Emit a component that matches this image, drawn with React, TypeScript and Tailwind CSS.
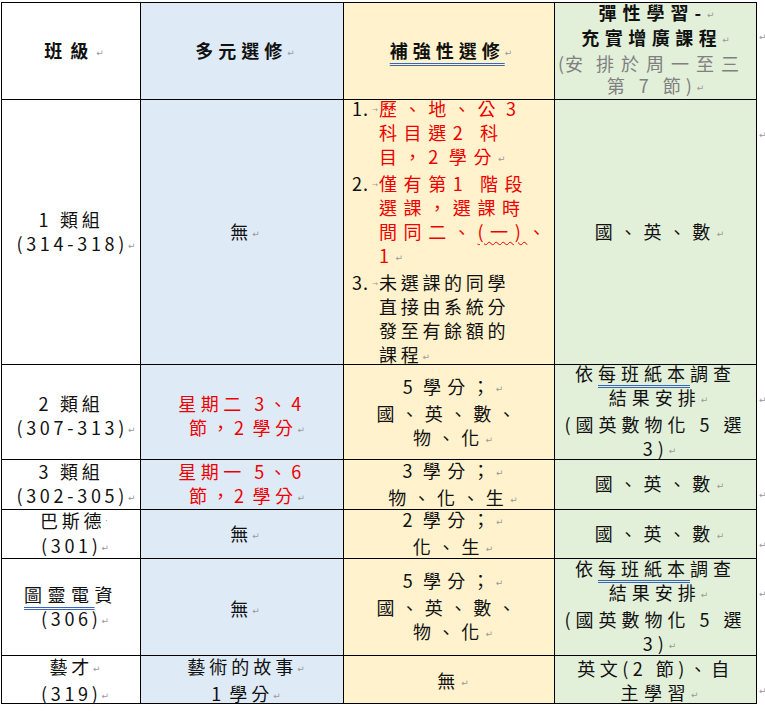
import React from "react";

const P = () => (
  <span className="font-['DejaVu_Sans',sans-serif] text-[9px] font-normal text-[#9a9a9a] tracking-normal align-[2px] no-underline">↵</span>
);

const Dot = () => (
  <span className="font-['DejaVu_Sans',sans-serif] text-[9px] font-normal text-[#9a9a9a] tracking-normal align-[4px]">·</span>
);

const Sp = () => <span className="tracking-[0px]"> </span>;

const Tab = () => (
  <span className="font-['DejaVu_Sans',sans-serif] text-[7px] text-[#9a9a9a] tracking-normal align-[4px] ml-[3px]">→</span>
);

const Item = ({ n, children }: { n: string; children: React.ReactNode }) => (
  <div className="flex">
    <div className="w-[27px] shrink-0 whitespace-nowrap tracking-[1px]">
      {n}
      <Tab />
    </div>
    <div className="whitespace-nowrap">{children}</div>
  </div>
);

const EndMark = () => (
  <div className="pt-[24px] pl-[2px] leading-[12px]">
    <span className="font-['DejaVu_Sans',sans-serif] text-[9px] text-[#9a9a9a]">↵</span>
  </div>
);

export default function App() {
  return (
    <div className="w-[765px] h-[711px] bg-white text-[#111] font-['Noto_Sans_CJK_TC','Noto_Sans_CJK_JP',sans-serif] text-[18px] leading-[24px]">
      <div className="pt-[2px] pl-px">
        <div className="grid grid-cols-[140px_203px_211px_202px_16px] grid-rows-[98px_265px_95px_50px_49px_97px_48px] whitespace-nowrap">
          {/* Header row */}
          <div className="flex flex-col justify-center items-center text-center border-l border-t border-r border-b border-black bg-white font-bold tracking-[8px] pl-[6px]">
            <div>班級<P /></div>
          </div>
          <div className="flex flex-col justify-center items-center text-center border-t border-r border-b border-black bg-[#deeaf6] font-bold tracking-[5px] pl-[6px]">
            <div>多元選修<P /></div>
          </div>
          <div className="flex flex-col justify-center items-center text-center border-t border-r border-b border-black bg-[#fff2cc] font-bold tracking-[5px] pl-[4px]">
            <div>
              <span className="underline decoration-double decoration-[#3a66b8] underline-offset-[5px] decoration-1">補強性選修</span>
              <P />
            </div>
          </div>
          <div className="flex flex-col justify-center items-center text-center border-t border-r border-b border-black bg-[#e2efd9] tracking-[5px] leading-[22.5px] pb-[2px]">
            <div className="font-bold pl-[2px] tracking-[6px]">彈性學習-<P /></div>
            <div className="font-bold tracking-[5.5px]">充實增廣課程<P /></div>
            <div className="self-stretch text-left pl-[3px] text-[#808080] tracking-[7px]">
              <span className="tracking-[1px]">(</span>
              <span className="mr-[6px]">安</span>排於周一至三
            </div>
            <div className="text-[#808080] tracking-[5px]">第 7 節)<P /></div>
          </div>
          <EndMark />

          {/* Row 1 */}
          <div className="flex flex-col justify-center items-center text-center border-l border-r border-b border-black bg-white tracking-[3.7px]">
            <div>1 類組</div>
            <div className="pl-[10px]">(314-318)<P /></div>
          </div>
          <div className="flex flex-col justify-center items-center text-center border-r border-b border-black bg-[#deeaf6] tracking-[4px]">
            <div className="pl-[6px]">無<P /></div>
          </div>
          <div className="flex flex-col justify-center items-start border-r border-b border-black bg-[#fff2cc] pl-[8px]">
            <Item n="1.">
              <div className="text-[#ee0000] tracking-[6.6px]">
                <div>歷、地、公<Sp />3</div>
                <div>科目選2 科</div>
                <div>目，2<Sp />學分<P /></div>
              </div>
            </Item>
            <Item n="2.">
              <div className="text-[#ee0000] tracking-[6.6px]">
                <div>僅有第1 階段</div>
                <div>選課，選課時</div>
                <div>
                  間同二、
                  <span className="underline decoration-wavy decoration-[#e00] underline-offset-[2px] decoration-1">(一)</span>、
                </div>
                <div>1<P /></div>
              </div>
            </Item>
            <Item n="3.">
              <div className="tracking-[3.7px]">
                <div>未選課的同學</div>
                <div>直接由系統分</div>
                <div>發至有餘額的</div>
                <div>課程<P /></div>
              </div>
            </Item>
          </div>
          <div className="flex flex-col justify-center items-center text-center border-r border-b border-black bg-[#e2efd9] tracking-[6.4px]">
            <div className="pl-[8px]">國、英、數<P /></div>
          </div>
          <EndMark />

          {/* Row 2 */}
          <div className="flex flex-col justify-center items-center text-center border-l border-r border-b border-black bg-white tracking-[3.7px] pt-[8px]">
            <div>2 類組</div>
            <div className="pl-[10px]">(307-313)<P /></div>
          </div>
          <div className="flex flex-col justify-center items-center text-center border-r border-b border-black bg-[#deeaf6] tracking-[4.5px] text-[#ee0000] pt-[8px]">
            <div>星期二 3、4</div>
            <div className="pl-[10px]">節，2<Sp />學分<P /></div>
          </div>
          <div className="flex flex-col justify-center items-center text-center border-r border-b border-black bg-[#fff2cc] tracking-[6.2px] pt-[2px]">
            <div className="pl-[8px]">5<Sp />學分；<P /></div>
            <div>國、英、數、</div>
            <div className="pl-[8px]">物、化<P /></div>
          </div>
          <div className="flex flex-col justify-center items-center text-center border-r border-b border-black bg-[#e2efd9] tracking-[5px]">
            <div>
              依<span className="underline decoration-double decoration-[#3a66b8] underline-offset-[4px] decoration-1">每班紙本</span>調查
            </div>
            <div className="pl-[6px]">結果安排<P /></div>
            <div>(國英數物化 5 選</div>
            <div className="pl-[8px]">3)<P /></div>
          </div>
          <EndMark />

          {/* Row 3 */}
          <div className="flex flex-col justify-center items-center text-center border-l border-r border-b border-black bg-white tracking-[3.7px]">
            <div>3 類組</div>
            <div className="pl-[10px]">(302-305)<P /></div>
          </div>
          <div className="flex flex-col justify-center items-center text-center border-r border-b border-black bg-[#deeaf6] tracking-[4.5px] text-[#ee0000]">
            <div>星期一 5、6</div>
            <div className="pl-[10px]">節，2<Sp />學分<P /></div>
          </div>
          <div className="flex flex-col justify-center items-center text-center border-r border-b border-black bg-[#fff2cc] tracking-[6.4px]">
            <div className="pl-[8px]">3<Sp />學分；<P /></div>
            <div className="pl-[8px]">物、化、生<P /></div>
          </div>
          <div className="flex flex-col justify-center items-center text-center border-r border-b border-black bg-[#e2efd9] tracking-[6.4px]">
            <div className="pl-[8px]">國、英、數<P /></div>
          </div>
          <EndMark />

          {/* Row 4 */}
          <div className="flex flex-col justify-center items-center text-center border-l border-r border-b border-black bg-white tracking-[3.7px]">
            <div className="pl-[6px]">巴斯德<Dot /></div>
            <div className="pl-[8px]">(301)<P /></div>
          </div>
          <div className="flex flex-col justify-center items-center text-center border-r border-b border-black bg-[#deeaf6] tracking-[4px]">
            <div className="pl-[6px]">無<P /></div>
          </div>
          <div className="flex flex-col justify-center items-center text-center border-r border-b border-black bg-[#fff2cc] tracking-[6.4px]">
            <div className="pl-[8px]">2<Sp />學分；<P /></div>
            <div className="pl-[8px]">化、生<P /></div>
          </div>
          <div className="flex flex-col justify-center items-center text-center border-r border-b border-black bg-[#e2efd9] tracking-[6.4px]">
            <div className="pl-[8px]">國、英、數<P /></div>
          </div>
          <EndMark />

          {/* Row 5 */}
          <div className="flex flex-col justify-center items-center text-center border-l border-r border-b border-black bg-white tracking-[5.5px]">
            <div>
              <span className="underline decoration-double decoration-[#3a66b8] underline-offset-[5px] decoration-1">圖靈電</span>資
            </div>
            <div className="pl-[8px] tracking-[3.7px]">(306)<P /></div>
          </div>
          <div className="flex flex-col justify-center items-center text-center border-r border-b border-black bg-[#deeaf6] tracking-[4px] pt-[4px]">
            <div className="pl-[6px]">無<P /></div>
          </div>
          <div className="flex flex-col justify-center items-center text-center border-r border-b border-black bg-[#fff2cc] tracking-[6.2px]">
            <div className="pl-[8px]">5<Sp />學分；<P /></div>
            <div>國、英、數、</div>
            <div className="pl-[8px]">物、化<P /></div>
          </div>
          <div className="flex flex-col justify-center items-center text-center border-r border-b border-black bg-[#e2efd9] tracking-[5px]">
            <div>
              依<span className="underline decoration-double decoration-[#3a66b8] underline-offset-[4px] decoration-1">每班紙本</span>調查
            </div>
            <div className="pl-[6px]">結果安排<P /></div>
            <div>(國英數物化 5 選</div>
            <div className="pl-[8px]">3)<P /></div>
          </div>
          <EndMark />

          {/* Row 6 */}
          <div className="flex flex-col justify-center items-center text-center border-l border-r border-b border-black bg-white tracking-[3.7px] pt-[3px]">
            <div className="pl-[8px]">藝才<P /></div>
            <div className="pl-[8px]">(319)<P /></div>
          </div>
          <div className="flex flex-col justify-center items-center text-center border-r border-b border-black bg-[#deeaf6] tracking-[4px] pt-[3px]">
            <div className="pl-[8px]">藝術的故事<P /></div>
            <div className="pl-[8px]">1<Sp />學分<P /></div>
          </div>
          <div className="flex flex-col justify-center items-center text-center border-r border-b border-black bg-[#fff2cc] tracking-[6px] pt-[3px]">
            <div className="pl-[8px]">無<P /></div>
          </div>
          <div className="flex flex-col justify-center items-center text-center border-r border-b border-black bg-[#e2efd9] tracking-[4.5px] pt-[3px]">
            <div>英文(2 節)、自</div>
            <div className="pl-[8px] tracking-[5.5px]">主學習<P /></div>
          </div>
          <EndMark />
        </div>
      </div>
    </div>
  );
}
